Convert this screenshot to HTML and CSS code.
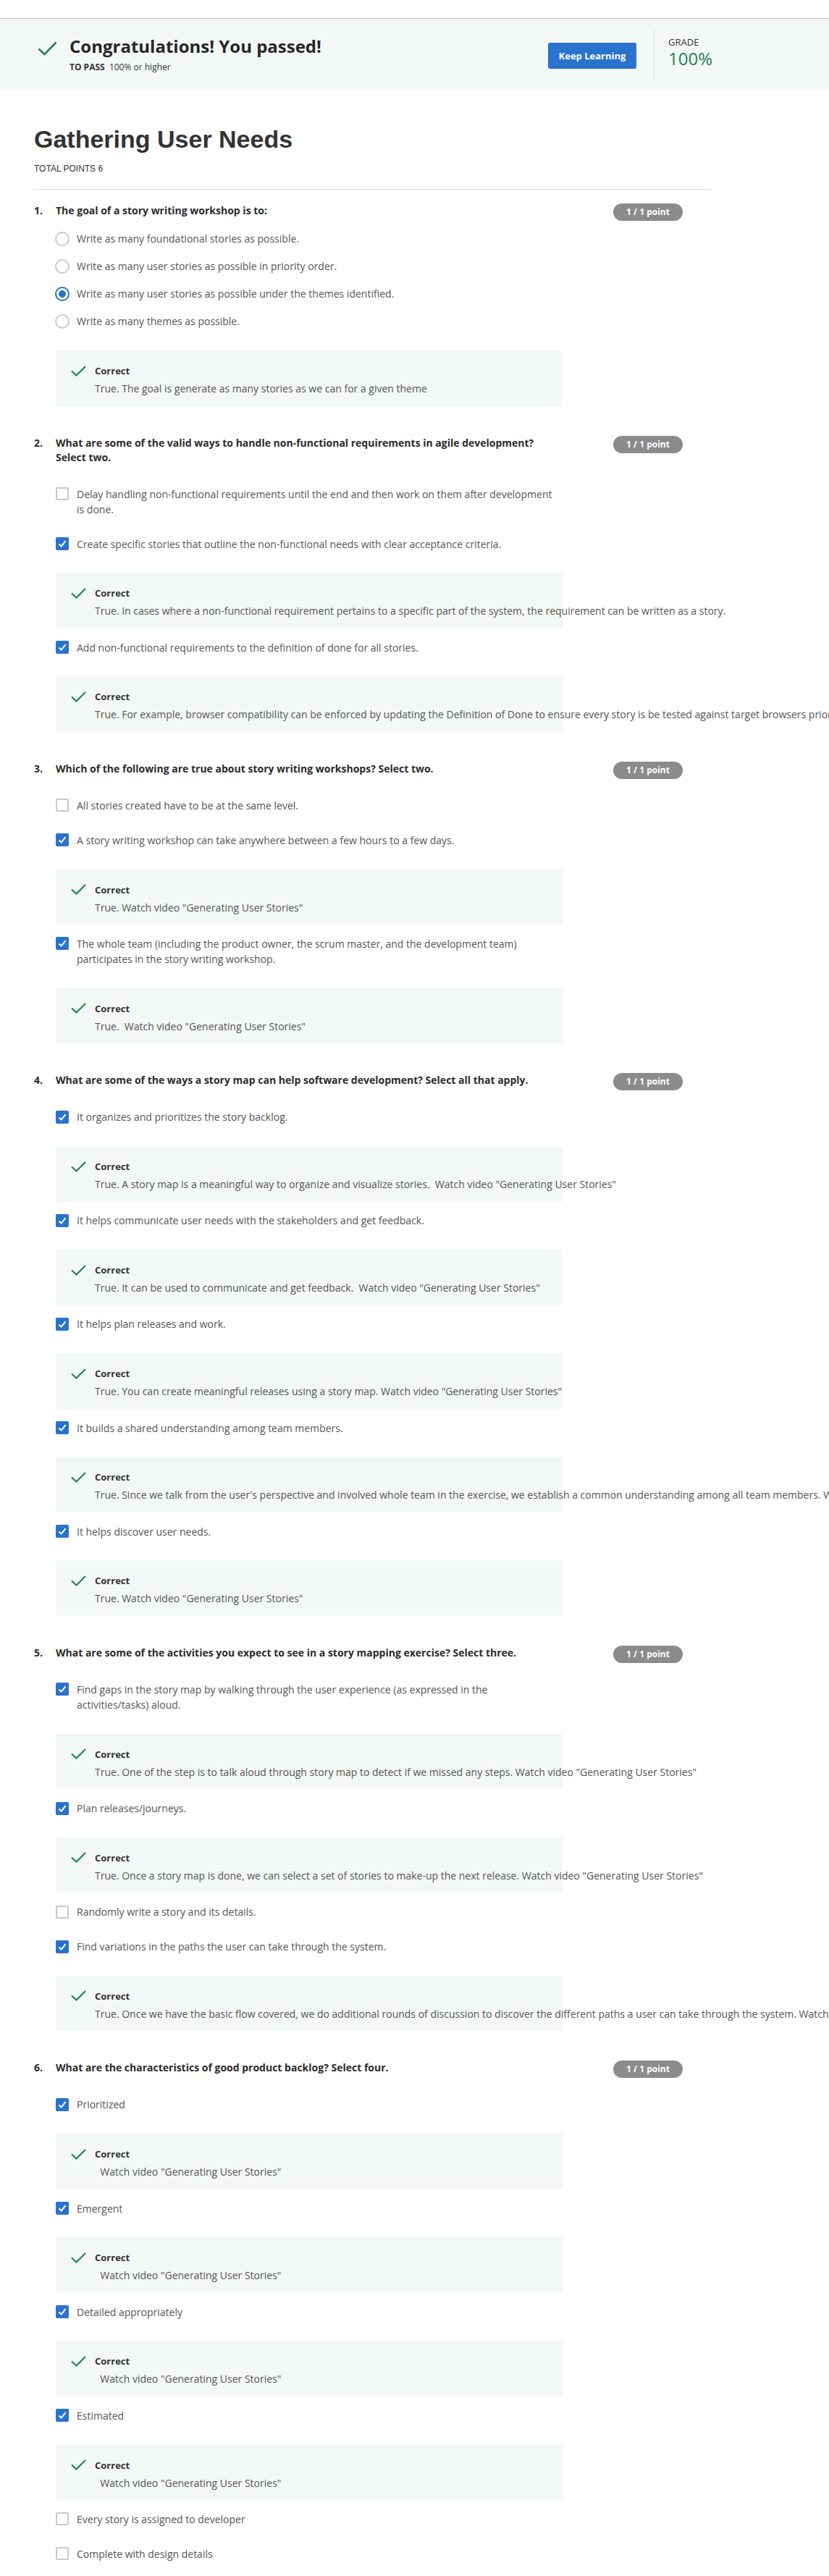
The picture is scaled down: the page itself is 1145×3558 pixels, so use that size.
FILE: index.html
```html
<!DOCTYPE html>
<html lang="en">
<head>
<meta charset="utf-8">
<title>Gathering User Needs</title>
<link rel="stylesheet" href="styles.css">
</head>
<body>
<div class="topbar"></div>
<header class="banner">
  <div class="banner-inner">
    <svg class="pass-check" width="27" height="20" viewBox="0 0 27 20"><path d="M1.5 10.5 L9.5 18 L25.5 1.5" fill="none" stroke="#1f8354" stroke-width="2.6"/></svg>
    <div class="pass-text">
      <div class="pass-title">Congratulations! You passed!</div>
      <div class="pass-sub"><b>TO PASS</b>&nbsp; 100% or higher</div>
    </div>
    <button class="keep">Keep Learning</button>
    <div class="vdiv"></div>
    <div class="grade">
      <div class="grade-label">GRADE</div>
      <div class="grade-val">100%</div>
    </div>
  </div>
</header>

<main class="page">
  <h1 class="title">Gathering User Needs</h1>
  <div class="total">TOTAL POINTS 6</div>
  <hr class="rule">

  <!-- Q1 -->
  <section class="q">
    <div class="qhead"><span class="num">1.</span><div class="qtext">The goal of a story writing workshop is to:</div><span class="badge">1 / 1 point</span></div>
    <div class="opts radios">
      <div class="opt radio"><span class="rd"></span><span class="otext">Write as many foundational stories as possible.</span></div>
      <div class="opt radio"><span class="rd"></span><span class="otext">Write as many user stories as possible in priority order.</span></div>
      <div class="opt radio"><span class="rd on"></span><span class="otext">Write as many user stories as possible under the themes identified.</span></div>
      <div class="opt radio"><span class="rd"></span><span class="otext">Write as many themes as possible.</span></div>
      <div class="fb"><div class="fb-head"><svg class="ok" width="21" height="15" viewBox="0 0 21 15"><path d="M1 7.5 L7.5 13.5 L20 1" fill="none" stroke="#1f8354" stroke-width="2.2"/></svg><span>Correct</span></div><div class="fb-text">True. The goal is generate as many stories as we can for a given theme</div></div>
    </div>
  </section>

  <!-- Q2 -->
  <section class="q">
    <div class="qhead"><span class="num">2.</span><div class="qtext">What are some of the valid ways to handle non-functional requirements in agile development? Select two.</div><span class="badge">1 / 1 point</span></div>
    <div class="opts cbs">
      <div class="opt cb"><span class="ck"></span><span class="otext">Delay handling non-functional requirements until the end and then work on them after development is done.</span></div>
      <div class="opt cb"><span class="ck on"><svg width="18" height="18" viewBox="0 0 18 18"><path d="M4.5 9.5 L7.7 12.6 L13.6 5.2" fill="none" stroke="#fff" stroke-width="2"/></svg></span><span class="otext">Create specific stories that outline the non-functional needs with clear acceptance criteria.</span></div>
      <div class="fb"><div class="fb-head"><svg class="ok" width="21" height="15" viewBox="0 0 21 15"><path d="M1 7.5 L7.5 13.5 L20 1" fill="none" stroke="#1f8354" stroke-width="2.2"/></svg><span>Correct</span></div><div class="fb-text">True. In cases where a non-functional requirement pertains to a specific part of the system, the requirement can be written as a story.</div></div>
      <div class="opt cb"><span class="ck on"><svg width="18" height="18" viewBox="0 0 18 18"><path d="M4.5 9.5 L7.7 12.6 L13.6 5.2" fill="none" stroke="#fff" stroke-width="2"/></svg></span><span class="otext">Add non-functional requirements to the definition of done for all stories.</span></div>
      <div class="fb"><div class="fb-head"><svg class="ok" width="21" height="15" viewBox="0 0 21 15"><path d="M1 7.5 L7.5 13.5 L20 1" fill="none" stroke="#1f8354" stroke-width="2.2"/></svg><span>Correct</span></div><div class="fb-text">True. For example, browser compatibility can be enforced by updating the Definition of Done to ensure every story is be tested against target browsers prior to being accepted.</div></div>
    </div>
  </section>

  <!-- Q3 -->
  <section class="q">
    <div class="qhead"><span class="num">3.</span><div class="qtext">Which of the following are true about story writing workshops? Select two.</div><span class="badge">1 / 1 point</span></div>
    <div class="opts cbs">
      <div class="opt cb"><span class="ck"></span><span class="otext">All stories created have to be at the same level.</span></div>
      <div class="opt cb"><span class="ck on"><svg width="18" height="18" viewBox="0 0 18 18"><path d="M4.5 9.5 L7.7 12.6 L13.6 5.2" fill="none" stroke="#fff" stroke-width="2"/></svg></span><span class="otext">A story writing workshop can take anywhere between a few hours to a few days.</span></div>
      <div class="fb"><div class="fb-head"><svg class="ok" width="21" height="15" viewBox="0 0 21 15"><path d="M1 7.5 L7.5 13.5 L20 1" fill="none" stroke="#1f8354" stroke-width="2.2"/></svg><span>Correct</span></div><div class="fb-text">True. Watch video "Generating User Stories"</div></div>
      <div class="opt cb"><span class="ck on"><svg width="18" height="18" viewBox="0 0 18 18"><path d="M4.5 9.5 L7.7 12.6 L13.6 5.2" fill="none" stroke="#fff" stroke-width="2"/></svg></span><span class="otext">The whole team (including the product owner, the scrum master, and the development team) participates in the story writing workshop.</span></div>
      <div class="fb"><div class="fb-head"><svg class="ok" width="21" height="15" viewBox="0 0 21 15"><path d="M1 7.5 L7.5 13.5 L20 1" fill="none" stroke="#1f8354" stroke-width="2.2"/></svg><span>Correct</span></div><div class="fb-text">True.&nbsp; Watch video "Generating User Stories"</div></div>
    </div>
  </section>

  <!-- Q4 -->
  <section class="q">
    <div class="qhead"><span class="num">4.</span><div class="qtext">What are some of the ways a story map can help software development? Select all that apply.</div><span class="badge">1 / 1 point</span></div>
    <div class="opts cbs">
      <div class="opt cb"><span class="ck on"><svg width="18" height="18" viewBox="0 0 18 18"><path d="M4.5 9.5 L7.7 12.6 L13.6 5.2" fill="none" stroke="#fff" stroke-width="2"/></svg></span><span class="otext">It organizes and prioritizes the story backlog.</span></div>
      <div class="fb"><div class="fb-head"><svg class="ok" width="21" height="15" viewBox="0 0 21 15"><path d="M1 7.5 L7.5 13.5 L20 1" fill="none" stroke="#1f8354" stroke-width="2.2"/></svg><span>Correct</span></div><div class="fb-text">True. A story map is a meaningful way to organize and visualize stories.&nbsp; Watch video "Generating User Stories"</div></div>
      <div class="opt cb"><span class="ck on"><svg width="18" height="18" viewBox="0 0 18 18"><path d="M4.5 9.5 L7.7 12.6 L13.6 5.2" fill="none" stroke="#fff" stroke-width="2"/></svg></span><span class="otext">It helps communicate user needs with the stakeholders and get feedback.</span></div>
      <div class="fb"><div class="fb-head"><svg class="ok" width="21" height="15" viewBox="0 0 21 15"><path d="M1 7.5 L7.5 13.5 L20 1" fill="none" stroke="#1f8354" stroke-width="2.2"/></svg><span>Correct</span></div><div class="fb-text">True. It can be used to communicate and get feedback.&nbsp; Watch video "Generating User Stories"</div></div>
      <div class="opt cb"><span class="ck on"><svg width="18" height="18" viewBox="0 0 18 18"><path d="M4.5 9.5 L7.7 12.6 L13.6 5.2" fill="none" stroke="#fff" stroke-width="2"/></svg></span><span class="otext">It helps plan releases and work.</span></div>
      <div class="fb"><div class="fb-head"><svg class="ok" width="21" height="15" viewBox="0 0 21 15"><path d="M1 7.5 L7.5 13.5 L20 1" fill="none" stroke="#1f8354" stroke-width="2.2"/></svg><span>Correct</span></div><div class="fb-text">True. You can create meaningful releases using a story map. Watch video "Generating User Stories"</div></div>
      <div class="opt cb"><span class="ck on"><svg width="18" height="18" viewBox="0 0 18 18"><path d="M4.5 9.5 L7.7 12.6 L13.6 5.2" fill="none" stroke="#fff" stroke-width="2"/></svg></span><span class="otext">It builds a shared understanding among team members.</span></div>
      <div class="fb"><div class="fb-head"><svg class="ok" width="21" height="15" viewBox="0 0 21 15"><path d="M1 7.5 L7.5 13.5 L20 1" fill="none" stroke="#1f8354" stroke-width="2.2"/></svg><span>Correct</span></div><div class="fb-text">True. Since we talk from the user's perspective and involved whole team in the exercise, we establish a common understanding among all team members. Watch video "Generating User Stories"</div></div>
      <div class="opt cb"><span class="ck on"><svg width="18" height="18" viewBox="0 0 18 18"><path d="M4.5 9.5 L7.7 12.6 L13.6 5.2" fill="none" stroke="#fff" stroke-width="2"/></svg></span><span class="otext">It helps discover user needs.</span></div>
      <div class="fb"><div class="fb-head"><svg class="ok" width="21" height="15" viewBox="0 0 21 15"><path d="M1 7.5 L7.5 13.5 L20 1" fill="none" stroke="#1f8354" stroke-width="2.2"/></svg><span>Correct</span></div><div class="fb-text">True. Watch video "Generating User Stories"</div></div>
    </div>
  </section>

  <!-- Q5 -->
  <section class="q">
    <div class="qhead"><span class="num">5.</span><div class="qtext">What are some of the activities you expect to see in a story mapping exercise? Select three.</div><span class="badge">1 / 1 point</span></div>
    <div class="opts cbs">
      <div class="opt cb"><span class="ck on"><svg width="18" height="18" viewBox="0 0 18 18"><path d="M4.5 9.5 L7.7 12.6 L13.6 5.2" fill="none" stroke="#fff" stroke-width="2"/></svg></span><span class="otext">Find gaps in the story map by walking through the user experience (as expressed in the activities/tasks) aloud.</span></div>
      <div class="fb"><div class="fb-head"><svg class="ok" width="21" height="15" viewBox="0 0 21 15"><path d="M1 7.5 L7.5 13.5 L20 1" fill="none" stroke="#1f8354" stroke-width="2.2"/></svg><span>Correct</span></div><div class="fb-text">True. One of the step is to talk aloud through story map to detect if we missed any steps. Watch video "Generating User Stories"</div></div>
      <div class="opt cb"><span class="ck on"><svg width="18" height="18" viewBox="0 0 18 18"><path d="M4.5 9.5 L7.7 12.6 L13.6 5.2" fill="none" stroke="#fff" stroke-width="2"/></svg></span><span class="otext">Plan releases/journeys.</span></div>
      <div class="fb"><div class="fb-head"><svg class="ok" width="21" height="15" viewBox="0 0 21 15"><path d="M1 7.5 L7.5 13.5 L20 1" fill="none" stroke="#1f8354" stroke-width="2.2"/></svg><span>Correct</span></div><div class="fb-text">True. Once a story map is done, we can select a set of stories to make-up the next release. Watch video "Generating User Stories"</div></div>
      <div class="opt cb"><span class="ck"></span><span class="otext">Randomly write a story and its details.</span></div>
      <div class="opt cb"><span class="ck on"><svg width="18" height="18" viewBox="0 0 18 18"><path d="M4.5 9.5 L7.7 12.6 L13.6 5.2" fill="none" stroke="#fff" stroke-width="2"/></svg></span><span class="otext">Find variations in the paths the user can take through the system.</span></div>
      <div class="fb"><div class="fb-head"><svg class="ok" width="21" height="15" viewBox="0 0 21 15"><path d="M1 7.5 L7.5 13.5 L20 1" fill="none" stroke="#1f8354" stroke-width="2.2"/></svg><span>Correct</span></div><div class="fb-text">True. Once we have the basic flow covered, we do additional rounds of discussion to discover the different paths a user can take through the system. Watch video "Generating User Stories"</div></div>
    </div>
  </section>

  <!-- Q6 -->
  <section class="q">
    <div class="qhead"><span class="num">6.</span><div class="qtext">What are the characteristics of good product backlog? Select four.</div><span class="badge">1 / 1 point</span></div>
    <div class="opts cbs">
      <div class="opt cb"><span class="ck on"><svg width="18" height="18" viewBox="0 0 18 18"><path d="M4.5 9.5 L7.7 12.6 L13.6 5.2" fill="none" stroke="#fff" stroke-width="2"/></svg></span><span class="otext">Prioritized</span></div>
      <div class="fb"><div class="fb-head"><svg class="ok" width="21" height="15" viewBox="0 0 21 15"><path d="M1 7.5 L7.5 13.5 L20 1" fill="none" stroke="#1f8354" stroke-width="2.2"/></svg><span>Correct</span></div><div class="fb-text">&nbsp; Watch video "Generating User Stories"</div></div>
      <div class="opt cb"><span class="ck on"><svg width="18" height="18" viewBox="0 0 18 18"><path d="M4.5 9.5 L7.7 12.6 L13.6 5.2" fill="none" stroke="#fff" stroke-width="2"/></svg></span><span class="otext">Emergent</span></div>
      <div class="fb"><div class="fb-head"><svg class="ok" width="21" height="15" viewBox="0 0 21 15"><path d="M1 7.5 L7.5 13.5 L20 1" fill="none" stroke="#1f8354" stroke-width="2.2"/></svg><span>Correct</span></div><div class="fb-text">&nbsp; Watch video "Generating User Stories"</div></div>
      <div class="opt cb"><span class="ck on"><svg width="18" height="18" viewBox="0 0 18 18"><path d="M4.5 9.5 L7.7 12.6 L13.6 5.2" fill="none" stroke="#fff" stroke-width="2"/></svg></span><span class="otext">Detailed appropriately</span></div>
      <div class="fb"><div class="fb-head"><svg class="ok" width="21" height="15" viewBox="0 0 21 15"><path d="M1 7.5 L7.5 13.5 L20 1" fill="none" stroke="#1f8354" stroke-width="2.2"/></svg><span>Correct</span></div><div class="fb-text">&nbsp; Watch video "Generating User Stories"</div></div>
      <div class="opt cb"><span class="ck on"><svg width="18" height="18" viewBox="0 0 18 18"><path d="M4.5 9.5 L7.7 12.6 L13.6 5.2" fill="none" stroke="#fff" stroke-width="2"/></svg></span><span class="otext">Estimated</span></div>
      <div class="fb"><div class="fb-head"><svg class="ok" width="21" height="15" viewBox="0 0 21 15"><path d="M1 7.5 L7.5 13.5 L20 1" fill="none" stroke="#1f8354" stroke-width="2.2"/></svg><span>Correct</span></div><div class="fb-text">&nbsp; Watch video "Generating User Stories"</div></div>
      <div class="opt cb"><span class="ck"></span><span class="otext">Every story is assigned to developer</span></div>
      <div class="opt cb"><span class="ck"></span><span class="otext">Complete with design details</span></div>
    </div>
  </section>
</main>
</body>
</html>
```

FILE: styles.css
```css
html, body { overflow-x: hidden; }
body {
  margin: 0;
  background: #fff;
  font-family: "Open Sans", "Liberation Sans", Arial, sans-serif;
  color: #333;
}

.topbar {
  height: 25px;
  border-bottom: 1px solid #c9c9c9;
}

.banner {
  height: 97px;
  box-sizing: border-box;
  background: #f3f8f6;
}
.banner-inner {
  display: flex;
  align-items: flex-start;
  padding: 15px 0 14px;
  margin: 0 162px 0 52px;
}
.pass-check { flex: none; margin-top: 16px; }
.pass-text { flex: 1; margin-left: 17px; }
.pass-title {
  margin-top: 7px;
  font-size: 24px;
  line-height: 32px;
  font-weight: 700;
  color: #262626;
}
.pass-sub {
  margin-top: 5px;
  font-size: 12px;
  line-height: 16px;
  color: #333;
}
.pass-sub b { font-weight: 700; }

.keep {
  flex: none;
  margin-top: 18px;
  width: 122px;
  height: 36px;
  border: 0;
  border-radius: 3px;
  background: #2a73cc;
  color: #fff;
  font-family: "Open Sans", sans-serif;
  font-weight: 700;
  font-size: 13px;
  padding: 0;
}
.vdiv {
  flex: none;
  width: 1px;
  height: 68px;
  background: #dcdfde;
  margin-left: 24px;
}
.grade { flex: none; width: 60px; margin-left: 19px; }
.grade-label {
  margin-top: 9px;
  font-size: 13px;
  line-height: 16px;
  color: #333;
}
.grade-val {
  margin-top: 1px;
  font-size: 24px;
  line-height: 28px;
  color: #1f8354;
}

.page {
  margin-left: 47px;
  width: 936px;
}
.title {
  margin: 49px 0 0;
  font-family: "Liberation Sans", Arial, sans-serif;
  font-weight: 700;
  font-size: 34px;
  line-height: 40px;
  color: #333;
}
.total {
  margin-top: 13px;
  font-family: "Liberation Sans", Arial, sans-serif;
  font-size: 12px;
  line-height: 16px;
  color: #333;
}
.rule {
  margin: 20px 0 0;
  border: 0;
  border-top: 1px solid #dedede;
  height: 0;
}

.q { margin-top: 41px; }
.q:first-of-type { margin-top: 19px; }

.qhead {
  display: flex;
  align-items: flex-start;
  font-size: 14px;
  line-height: 20px;
  font-weight: 700;
  color: #2b2b2b;
}
.num { flex: none; width: 30px; }
.qtext { flex: none; width: 700px; }
.badge {
  flex: none;
  margin-left: 70px;
  margin-bottom: -4px;
  width: 96px;
  height: 24px;
  line-height: 24px;
  border-radius: 12px;
  background: #8b8b8b;
  color: #fff;
  font-size: 12px;
  font-weight: 700;
  text-align: center;
}

.opts {
  margin-left: 30px;
  width: 700px;
}
.opts.radios { margin-top: 10px; }
.opts.cbs { margin-top: 16px; }

.opt {
  display: flex;
  align-items: flex-start;
  font-size: 14px;
  color: #555;
}
.otext { flex: none; max-width: 662px; }

.opt.radio { padding: 9px 0; line-height: 20px; }
.rd {
  flex: none;
  box-sizing: border-box;
  width: 20px;
  height: 20px;
  margin-left: -1px;
  margin-right: 10px;
  border: 2px solid #c9c9c9;
  border-radius: 50%;
  background: #fff;
}
.rd.on {
  border: 2.5px solid #2a73cc;
  background: radial-gradient(circle, #2a73cc 0 4.6px, #fff 5.2px);
}

.opt.cb { padding: 14px 0 13px; line-height: 21px; }
.ck {
  flex: none;
  box-sizing: border-box;
  width: 18px;
  height: 18px;
  margin-top: 1.5px;
  margin-right: 11px;
  border: 2px solid #c9c9c9;
  border-radius: 2px;
  background: #fff;
}
.ck.on {
  border: 0;
  background: #2a73cc;
}
.ck svg { display: block; }

.fb {
  box-sizing: border-box;
  height: 76.5px;
  padding: 18px 0 12px 21px;
  background: #f3f8f6;
  margin: 16.8px 0 1.8px;
}
.radios .fb { margin-top: 21px; }
.fb-head {
  display: flex;
  align-items: center;
  height: 20px;
  font-size: 13px;
  font-weight: 700;
  color: #333;
}
.ok { flex: none; margin-right: 12px; }
.fb-text {
  margin: 4px 0 0 33px;
  font-size: 14px;
  line-height: 22px;
  color: #555;
  white-space: nowrap;
}
```
